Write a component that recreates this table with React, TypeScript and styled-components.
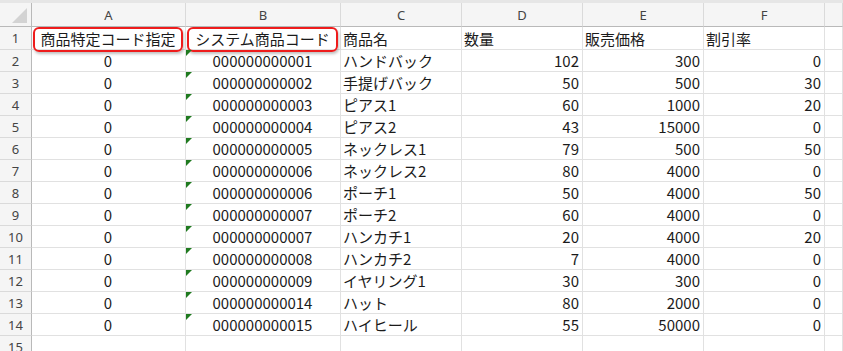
import React from "react";
import styled, { createGlobalStyle, css } from "styled-components";

const GlobalStyle = createGlobalStyle`
  html, body {
    margin: 0;
    padding: 0;
    background: #ffffff;
    overflow: hidden;
  }
  body {
    font-family: "Noto Sans CJK JP", "Noto Sans", sans-serif;
  }
`;

const COLS = "32px 154px 155px 121px 121px 121px 121px 1fr";

const Sheet = styled.div`
  width: 843px;
  height: 351px;
  overflow: hidden;
  background: #fff;
`;

const TopBand = styled.div`
  height: 3px;
  background: #e6e6e6;
`;

const Row = styled.div<{ $h: number }>`
  display: grid;
  grid-template-columns: ${COLS};
  height: ${(p) => p.$h}px;
`;

const HeadCell = styled.div<{ $corner?: boolean }>`
  box-sizing: border-box;
  background: #f5f5f5;
  border-right: 1px solid #dadada;
  border-bottom: 1px solid #b9b9b9;
  color: #444;
  font-family: "Noto Sans", sans-serif;
  font-size: 13px;
  display: flex;
  align-items: center;
  justify-content: center;
  position: relative;
  ${(p) =>
    p.$corner &&
    css`
      border-right-color: #b9b9b9;
    `}
`;

const Corner = styled.div`
  position: absolute;
  right: 4px;
  bottom: 3px;
  width: 0;
  height: 0;
  border-left: 15px solid transparent;
  border-bottom: 15px solid #d3d3d3;
`;

const RowNum = styled.div`
  box-sizing: border-box;
  background: #f5f5f5;
  border-right: 1px solid #b9b9b9;
  border-bottom: 1px solid #dadada;
  color: #444;
  font-family: "Noto Sans", sans-serif;
  font-size: 13px;
  display: flex;
  align-items: center;
  justify-content: center;
`;

type Align = "left" | "center" | "right";

const Cell = styled.div<{ $align?: Align }>`
  box-sizing: border-box;
  border-right: 1px solid #e1e1e1;
  border-bottom: 1px solid #e1e1e1;
  color: #1b1b1b;
  font-size: 15px;
  line-height: 1;
  padding: 0 3px 0 2px;
  display: flex;
  align-items: center;
  white-space: nowrap;
  position: relative;
  justify-content: ${(p) =>
    p.$align === "right" ? "flex-end" : p.$align === "center" ? "center" : "flex-start"};
`;

const Highlight = styled.div`
  position: absolute;
  left: 1px;
  top: 0;
  right: 2px;
  bottom: -3px;
  border: 2px solid #ee1c1c;
  border-radius: 6px;
  box-shadow: 1px 2px 3px rgba(0, 0, 0, 0.25);
  pointer-events: none;
`;

const TextMark = styled.span`
  position: absolute;
  left: 0;
  top: 0;
  width: 0;
  height: 0;
  border-top: 6px solid #1f7a1f;
  border-right: 6px solid transparent;
`;

const letters = ["A", "B", "C", "D", "E", "F", ""];

const headers = [
  "商品特定コード指定",
  "システム商品コード",
  "商品名",
  "数量",
  "販売価格",
  "割引率",
];

const data: [string, string, number, number, number][] = [
  ["000000000001", "ハンドバック", 102, 300, 0],
  ["000000000002", "手提げバック", 50, 500, 30],
  ["000000000003", "ピアス1", 60, 1000, 20],
  ["000000000004", "ピアス2", 43, 15000, 0],
  ["000000000005", "ネックレス1", 79, 500, 50],
  ["000000000006", "ネックレス2", 80, 4000, 0],
  ["000000000006", "ポーチ1", 50, 4000, 50],
  ["000000000007", "ポーチ2", 60, 4000, 0],
  ["000000000007", "ハンカチ1", 20, 4000, 20],
  ["000000000008", "ハンカチ2", 7, 4000, 0],
  ["000000000009", "イヤリング1", 30, 300, 0],
  ["000000000014", "ハット", 80, 2000, 0],
  ["000000000015", "ハイヒール", 55, 50000, 0],
];

export default function App() {
  return (
    <>
      <GlobalStyle />
      <Sheet>
        <TopBand />
        <Row $h={24}>
          <HeadCell $corner>
            <Corner />
          </HeadCell>
          {letters.map((l, i) => (
            <HeadCell key={i}>{l}</HeadCell>
          ))}
        </Row>

        <Row $h={23}>
          <RowNum>1</RowNum>
          <Cell $align="center">
            {headers[0]}
            <Highlight />
          </Cell>
          <Cell $align="center">
            {headers[1]}
            <Highlight />
          </Cell>
          {headers.slice(2).map((h) => (
            <Cell key={h}>{h}</Cell>
          ))}
          <Cell />
        </Row>

        {data.map(([code, name, qty, price, rate], i) => (
          <Row $h={22} key={i}>
            <RowNum>{i + 2}</RowNum>
            <Cell $align="center">0</Cell>
            <Cell $align="center">
              <TextMark />
              {code}
            </Cell>
            <Cell>{name}</Cell>
            <Cell $align="right">{qty}</Cell>
            <Cell $align="right">{price}</Cell>
            <Cell $align="right">{rate}</Cell>
            <Cell />
          </Row>
        ))}

        <Row $h={22}>
          <RowNum>15</RowNum>
          {letters.map((_, i) => (
            <Cell key={i} />
          ))}
        </Row>
      </Sheet>
    </>
  );
}
